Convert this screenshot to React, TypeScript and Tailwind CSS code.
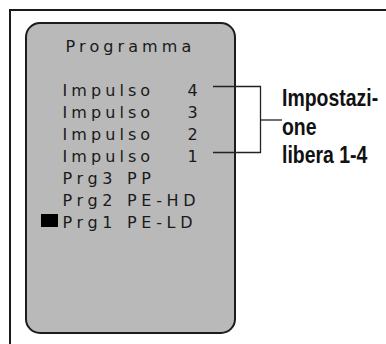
import React from 'react';

const impulses = ['4', '3', '2', '1'];
const programs = [
  { label: 'Prg3 PP', active: false },
  { label: 'Prg2 PE-HD', active: false },
  { label: 'Prg1 PE-LD', active: true },
];

const App: React.FC = () => {
  return (
    <div className="relative w-[386px] h-[344px] overflow-hidden bg-white">
      {/* frame */}
      <div className="ml-[9px] mt-[9px] h-[400px] border-t-2 border-l-2 border-[#1a1a1a] flex items-start">
        {/* display panel */}
        <div
          className="ml-[14px] mt-[11px] w-[211px] h-[312px] shrink-0 rounded-[15px] border-2 border-[#1c1c1c] bg-[#b9b9b9] pt-[11.5px] text-[16px] leading-[22px] text-[#1a1a1a]"
          style={{ fontFamily: '"DejaVu Sans", Verdana, sans-serif' }}
        >
          <div className="text-center tracking-[4.1px]">Programma</div>
          <div className="h-[22px]" />
          <div className="pl-[35.4px]">
            {impulses.map(n => (
              <div key={n} className="whitespace-nowrap">
                <span className="inline-block w-[125px] tracking-[4.1px]">Impulso</span>
                <span>{n}</span>
              </div>
            ))}
            {programs.map(p => (
              <div key={p.label} className="whitespace-nowrap tracking-[4.7px]">
                {p.active && (
                  <span className="inline-block w-[17px] h-[13px] bg-black -ml-[21.4px] mr-[4.4px] align-[1px]" />
                )}
                {p.label}
              </div>
            ))}
          </div>
        </div>

        {/* annotation */}
        <div
          className="ml-[46px] mt-[73px] text-[24px] leading-[28.5px] font-bold text-[#111] whitespace-nowrap origin-left scale-x-[0.81]"
          style={{ fontFamily: '"Liberation Sans", Arial, sans-serif' }}
        >
          <div>Impostazi-</div>
          <div>one</div>
          <div>libera 1-4</div>
        </div>
      </div>

      {/* bracket callout */}
      <svg className="absolute inset-0 pointer-events-none" width="386" height="344">
        <g stroke="#222" strokeWidth="1.3" fill="none">
          <path d="M213 86.5H260.5V152.5H213" />
          <path d="M260.5 120H282" />
        </g>
      </svg>
    </div>
  );
};

export default App;
